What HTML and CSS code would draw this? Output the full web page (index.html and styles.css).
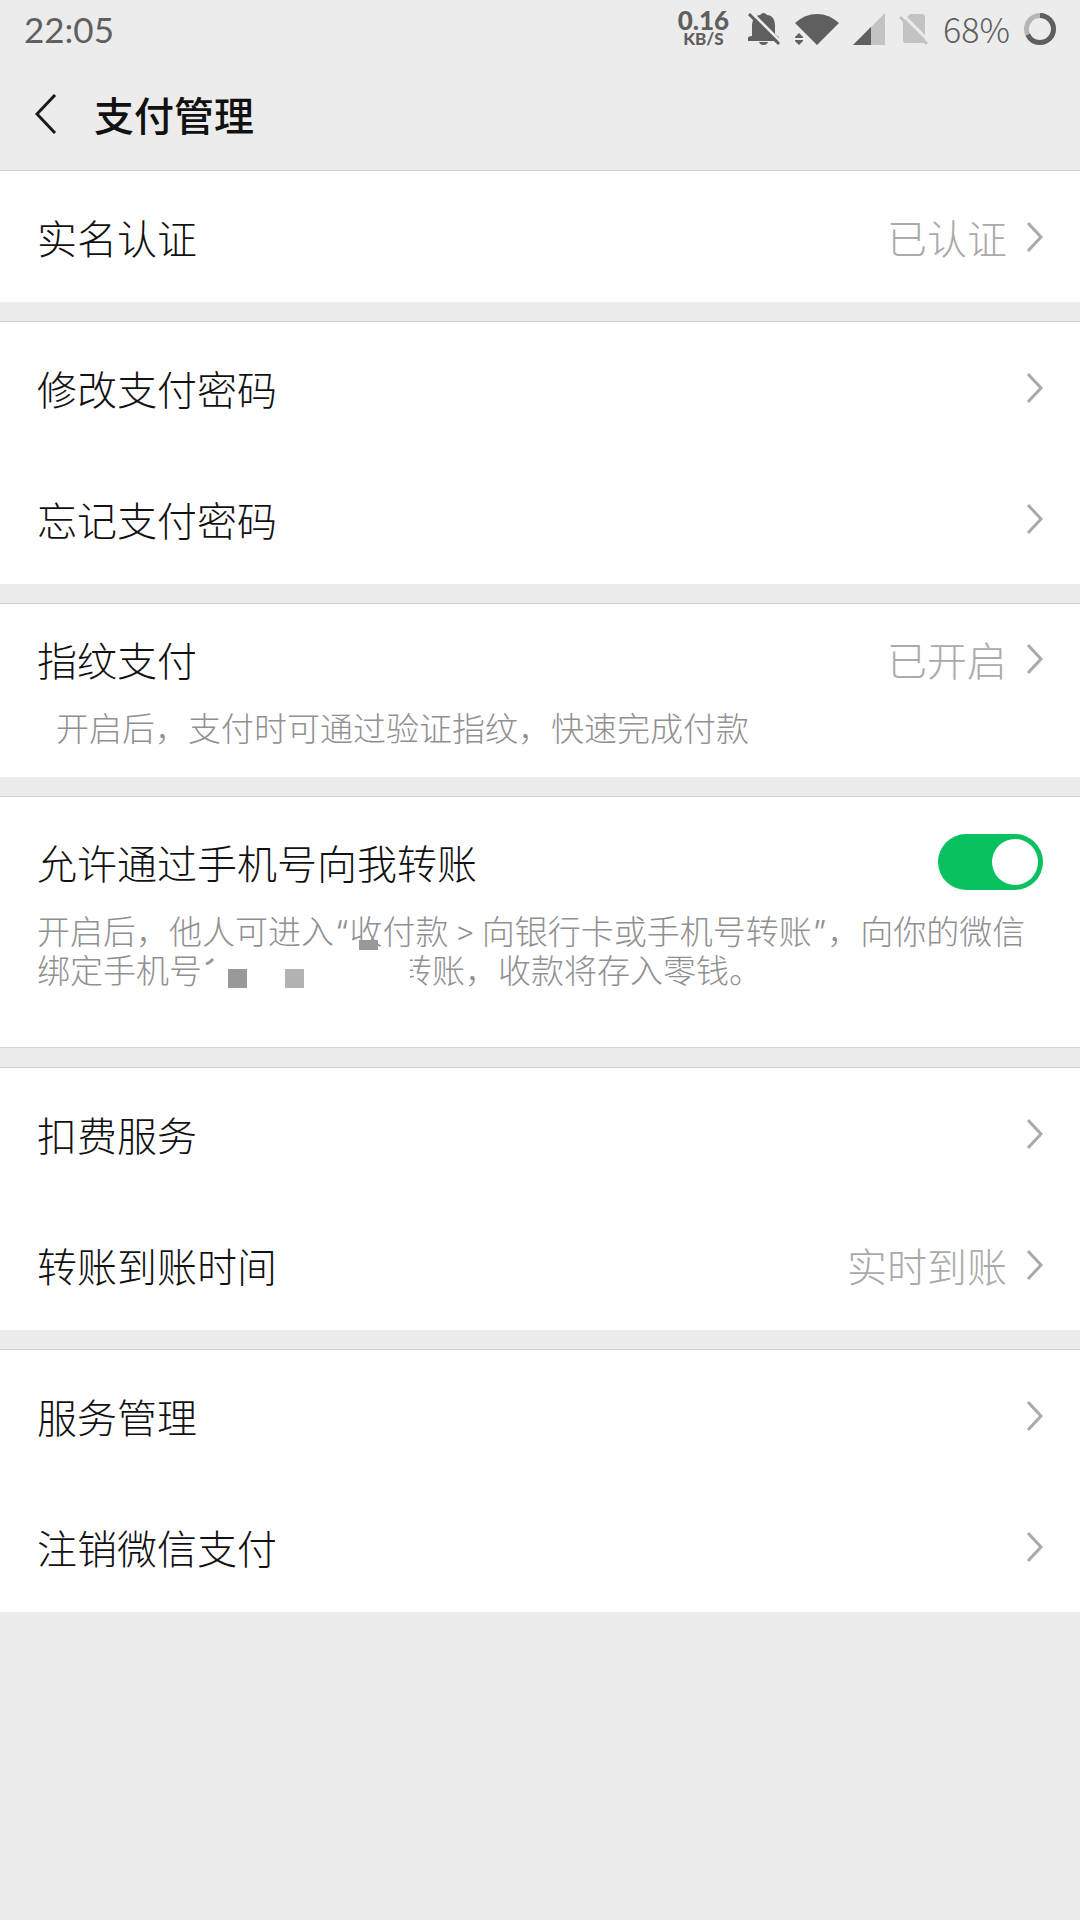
FILE: index.html
```html
<!DOCTYPE html>
<html lang="zh-CN">
<head>
  <meta charset="UTF-8">
  <meta name="viewport" content="width=device-width, initial-scale=1.0">
  <title>支付管理</title>
  <link rel="stylesheet" href="styles.css">
</head>
<body>
  <div class="status-bar">
    <span class="time">22:05</span>
    <div class="status-icons">
      <div class="net-speed">
        <span class="speed-value">0.16</span>
        <span class="speed-unit">KB/S</span>
      </div>
      <svg width="34" height="34" viewBox="0 0 34 34">
        <path fill="#5f5f5f" d="M5 24V14C5 7 9 3 13 3Q16.500 -1 20 3C25 3 28 7 28 14V21Q28 23 32 25V29H1V26Q1 24 5 24ZM12 30H21Q20 33 16.500 33Q13 33 12 30Z"/>
        <path stroke="#ececec" stroke-width="3" d="M4 0L35 31"/>
        <path stroke="#5f5f5f" stroke-width="3" d="M2 2L32 32"/>
      </svg>
      <svg width="44" height="34" viewBox="0 0 44 34">
        <path fill="#5f5f5f" d="M0 11Q10 2 22 2Q34 2 44 11L22 33Z"/>
        <path fill="#5f5f5f" d="M0 25L4 21L8 25V26H0ZM0 28H8V29L4 33L0 29Z"/>
      </svg>
      <svg width="32" height="32" viewBox="0 0 32 32">
        <path fill="#c3c3c3" d="M32 0V32H0Z"/>
        <path fill="#5f5f5f" d="M18 14V32H0Z"/>
      </svg>
      <svg width="30" height="34" viewBox="0 0 30 34">
        <path fill="#c3c3c3" d="M11 2H23Q26 2 26 5V28Q26 31 23 31H7Q4 31 4 28V9Z"/>
        <path stroke="#ececec" stroke-width="3" d="M3 2L31 30"/>
        <path stroke="#c3c3c3" stroke-width="3" d="M1 5L28 32"/>
      </svg>
      <span class="battery-level">68%</span>
      <svg width="32" height="32" viewBox="0 0 32 32">
        <circle cx="16" cy="16" r="13.500" fill="none" stroke="#b5b5b5" stroke-width="5"/>
        <circle cx="16" cy="16" r="13.500" fill="none" stroke="#5f5f5f" stroke-width="5" pathLength="100" stroke-dasharray="68 32" transform="rotate(-90 16 16)"/>
      </svg>
    </div>
  </div>

  <header class="title-bar">
    <button class="back" type="button" aria-label="返回">
      <svg width="22" height="40" viewBox="0 0 22 40"><path fill="none" stroke="#1a1a1a" stroke-width="3" d="M20 1L2 20L20 39"/></svg>
    </button>
    <h1>支付管理</h1>
  </header>

  <main>
    <section class="group">
      <a class="row" href="#">
        <span class="label">实名认证</span>
        <span class="value">已认证</span>
        <svg class="arrow" viewBox="0 0 16 30"><path d="M1 1L14 15L1 29"/></svg>
      </a>
    </section>

    <section class="group">
      <a class="row" href="#">
        <span class="label">修改支付密码</span>
        <svg class="arrow" viewBox="0 0 16 30"><path d="M1 1L14 15L1 29"/></svg>
      </a>
      <a class="row" href="#">
        <span class="label">忘记支付密码</span>
        <svg class="arrow" viewBox="0 0 16 30"><path d="M1 1L14 15L1 29"/></svg>
      </a>
    </section>

    <section class="group with-desc">
      <a class="row" href="#">
        <span class="label">指纹支付</span>
        <span class="value">已开启</span>
        <svg class="arrow" viewBox="0 0 16 30"><path d="M1 1L14 15L1 29"/></svg>
      </a>
      <p class="desc indent">开启后，支付时可通过验证指纹，快速完成付款</p>
    </section>

    <section class="group with-desc transfer">
      <div class="row">
        <label class="label" for="phoneTransfer">允许通过手机号向我转账</label>
        <input class="switch" type="checkbox" id="phoneTransfer" checked>
      </div>
      <p class="desc">开启后，他人可进入<span class="quote">“</span><span class="marked">收</span>付款 &gt; 向银行卡或手机号转账<span class="quote">”</span>，向你的微信<br>绑定手机号<svg class="phone-mask" width="208" height="39" viewBox="0 0 208 39"><path fill="#fff" d="M190 0H208V39H190Z"/><path fill="#999" d="M26 17H45V36H26Z"/><path fill="#b2b2b2" d="M83 17H102V36H83Z"/><path fill="none" stroke="#999" stroke-width="3" d="M4 12L8 10L11 7"/></svg>转账，收款将存入零钱。</p>
    </section>

    <section class="group">
      <a class="row" href="#">
        <span class="label">扣费服务</span>
        <svg class="arrow" viewBox="0 0 16 30"><path d="M1 1L14 15L1 29"/></svg>
      </a>
      <a class="row" href="#">
        <span class="label">转账到账时间</span>
        <span class="value">实时到账</span>
        <svg class="arrow" viewBox="0 0 16 30"><path d="M1 1L14 15L1 29"/></svg>
      </a>
    </section>

    <section class="group">
      <a class="row" href="#">
        <span class="label">服务管理</span>
        <svg class="arrow" viewBox="0 0 16 30"><path d="M1 1L14 15L1 29"/></svg>
      </a>
      <a class="row" href="#">
        <span class="label">注销微信支付</span>
        <svg class="arrow" viewBox="0 0 16 30"><path d="M1 1L14 15L1 29"/></svg>
      </a>
    </section>
  </main>
</body>
</html>
```

FILE: styles.css
```css
* {
  margin: 0;
  padding: 0;
  box-sizing: border-box;
}

body {
  font-family: Roboto, "Noto Sans CJK SC", sans-serif;
  font-weight: 300;
  background-color: #ececec;
  color: #111;
  min-height: 100vh;
}

/* status bar */
.status-bar {
  height: 60px;
  padding: 0 24px 2px;
  display: flex;
  align-items: center;
  justify-content: space-between;
  color: #5f5f5f;
}
.time {
  font-family: Lato, sans-serif;
  font-size: 35px;
  font-weight: 400;
}
.battery-level {
  font-family: "Noto Sans CJK SC", sans-serif;
  font-size: 34px;
  line-height: 40px;
}
.status-icons {
  display: flex;
  align-items: center;
  gap: 14px;
}
.net-speed {
  display: flex;
  flex-direction: column;
  align-items: center;
  margin-right: 4px;
  font-family: Lato, sans-serif;
  font-weight: 900;
}
.speed-value {
  font-size: 26px;
  line-height: 20px;
}
.speed-unit {
  font-size: 17px;
  line-height: 18px;
}

/* title bar */
.title-bar {
  height: 110px;
  padding: 0 35px 2px;
  display: flex;
  align-items: center;
  gap: 37px;
}
.title-bar h1 {
  font-size: 40px;
  font-weight: 500;
}
.back {
  display: flex;
  border: none;
  background: none;
  cursor: pointer;
}

/* list */
.group {
  background: #fff;
  border-top: 1px solid #d0d0d0;
  margin-bottom: 19px;
}
.row {
  min-height: 131px;
  padding: 0 37px;
  display: flex;
  align-items: center;
  color: inherit;
  text-decoration: none;
}
.label {
  flex: 1;
  font-size: 40px;
}
.value {
  font-size: 40px;
  color: #aaa;
  margin-right: 20px;
}
.arrow {
  width: 16px;
  height: 30px;
  fill: none;
  stroke: #aaa;
  stroke-width: 3;
}
.with-desc {
  padding: 25px 0 28px;
}
.with-desc .row {
  min-height: 60px;
}
.desc {
  padding: 21px 37px 0;
  font-size: 33px;
  line-height: 39px;
  color: #909090;
}
.indent {
  padding-left: 56px;
}
.quote {
  padding: 0 1px;
  font-family: Inter, sans-serif;
}
.transfer {
  padding-top: 35px;
  padding-bottom: 56px;
  border-bottom: 1px solid #d0d0d0;
}

.switch {
  appearance: none;
  width: 105px;
  height: 56px;
  padding: 5px;
  border-radius: 28px;
  background: #0ac160;
  display: flex;
  justify-content: flex-end;
}
.switch::before {
  content: "";
  width: 46px;
  height: 46px;
  border-radius: 50%;
  background: #fff;
}

/* blocks that hide the phone number */
.marked {
  position: relative;
}
.marked::after {
  content: "";
  position: absolute;
  left: 10px;
  bottom: 2px;
  width: 19px;
  height: 10px;
  background: #999;
}
.phone-mask {
  position: relative;
  vertical-align: top;
  margin-right: -11px;
}
```
